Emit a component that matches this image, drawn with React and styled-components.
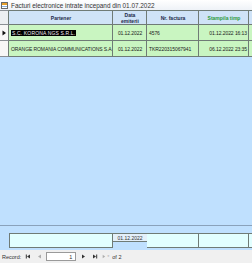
import React from 'react'
import styled, { createGlobalStyle } from 'styled-components'

const Global = createGlobalStyle`
  html, body { margin: 0; padding: 0; }
  body { font-family: "Liberation Sans", Arial, sans-serif; background: #bfe0fe; }
`

const Page = styled.div`
  width: 252px;
  height: 263px;
  display: flex;
  flex-direction: column;
  overflow: hidden;
  background: #bfe0fe;
`

const TitleBar = styled.div`
  height: 10px;
  display: flex;
  align-items: center;
  gap: 3px;
  padding-left: 1px;
  background: linear-gradient(#ffffff, #eef2f7);
  font-size: 6.4px;
  color: #333;
  white-space: nowrap;
`

const Grid = styled.div`
  display: grid;
  grid-template-columns: 9px 104px 34px 52px 50px 40px;
  grid-auto-rows: 16px;
  grid-template-rows: 15px;
`

const Cell = styled.div`
  box-sizing: border-box;
  border-right: 1px solid #6f7b76;
  border-bottom: 1px solid #6f7b76;
  background: ${p => (p.$head ? '#cfe3f7' : '#c9f5c1')};
  display: flex;
  align-items: center;
  justify-content: ${p => p.$align || 'flex-start'};
  padding: 0 1px 0 2px;
  font-size: 5px;
  letter-spacing: -0.08px;
  color: #1b1b1b;
  white-space: nowrap;
  overflow: hidden;
`

const HeadCell = styled(Cell)`
  font-weight: bold;
  letter-spacing: 0;
  color: ${p => (p.$green ? '#2b9a3c' : '#1d2a4a')};
  text-align: center;
  line-height: 6px;
  white-space: normal;
  border-top: 1px solid #6f7b76;
`

const Selector = styled.div`
  box-sizing: border-box;
  border-right: 1px solid #6f7b76;
  border-bottom: 1px solid #8a8f94;
  border-top: ${p => (p.$head ? '1px solid #8a8f94' : 'none')};
  background: ${p => (p.$head ? '#eceff2' : '#f7f7f7')};
  display: flex;
  align-items: center;
  justify-content: center;
`

const Selected = styled.span`
  background: #000;
  color: #f4eef4;
  padding: 0 1px;
  letter-spacing: 0.15px;
`

const Filler = styled.div`
  flex: 1;
  border-bottom: 1px solid #8aa2bb;
`

const FooterArea = styled.div`
  padding: 7px 0 2px 9px;
`

const FooterRow = styled.div`
  display: grid;
  grid-template-columns: 104px 34px 52px 50px 20px;
  height: 15px;
`

const FooterCell = styled.div`
  box-sizing: border-box;
  border: 1px solid #6f7b76;
  border-left: ${p => (p.$first ? '1px solid #6f7b76' : 'none')};
  background: #e2ffff;
`

const TotalCell = styled.div`
  box-sizing: border-box;
  height: 9px;
  border-top: 1px solid #6f7b76;
  border-bottom: 1px solid #6f7b76;
  background: #e4f0fa;
  font-size: 5px;
  color: #333;
  display: flex;
  align-items: center;
  justify-content: center;
`

const StatusBar = styled.div`
  flex: 0 0 13px;
  display: flex;
  align-items: center;
  gap: 3px;
  padding-left: 2px;
  background: #f0f0f0;
  font-size: 5.5px;
  color: #333;
`

const NavBtn = styled.div`
  width: 8px;
  height: 9px;
  display: flex;
  align-items: center;
  justify-content: center;
  opacity: ${p => (p.$off ? 0.35 : 1)};
`

const RecordBox = styled.div`
  box-sizing: border-box;
  width: 30px;
  height: 9px;
  border: 1px solid #9a9a9a;
  background: #fff;
  font-size: 5.5px;
  display: flex;
  align-items: center;
  justify-content: flex-end;
  padding-right: 3px;
`

const Tri = ({ dir = 'right', bar }) => (
  <svg width="7" height="7" viewBox="0 0 7 7">
    {dir === 'right' ? <path d="M2 1.5 L5 3.5 L2 5.5Z" fill="#333" /> : <path d="M5 1.5 L2 3.5 L5 5.5Z" fill="#333" />}
    {bar && (dir === 'right' ? <rect x="5.2" y="1.5" width="1" height="4" fill="#333" /> : <rect x="0.8" y="1.5" width="1" height="4" fill="#333" />)}
  </svg>
)

const rows = [
  { partner: 'S.C. KORONA NGS S.R.L.', date: '01.12.2022', nr: '4576', stamp: '01.12.2022 16:13', current: true },
  { partner: 'ORANGE ROMANIA COMMUNICATIONS S.A.', date: '01.12.2022', nr: 'TKR220315067941', stamp: '06.12.2022 23:35' },
]

const App = () => {
  return (
    <Page>
      <Global />
      <TitleBar>
        <svg width="7" height="7" viewBox="0 0 7 7">
          <rect x="0.5" y="0.5" width="6" height="6" fill="#fff" stroke="#6a6a6a" />
          <rect x="1" y="1" width="5" height="2" fill="#e8a02a" />
          <rect x="1" y="4" width="5" height="1" fill="#8ab0d8" />
        </svg>
        Facturi electronice intrate incepand din 01.07.2022
      </TitleBar>
      <Grid>
        <Selector $head />
        <HeadCell $head $align="center">Partener</HeadCell>
        <HeadCell $head $align="center">Data<br />emiterii</HeadCell>
        <HeadCell $head $align="center">Nr. factura</HeadCell>
        <HeadCell $head $align="center" $green>Stampila timp</HeadCell>
        <HeadCell $head />
        {rows.map(r => (
          <React.Fragment key={r.nr}>
            <Selector>
              {r.current && (
                <svg width="5" height="6" viewBox="0 0 5 6"><path d="M0.5 0.5 L4 3 L0.5 5.5Z" fill="#111" /></svg>
              )}
            </Selector>
            <Cell>{r.current ? <Selected>{r.partner}</Selected> : r.partner}</Cell>
            <Cell $align="center">{r.date}</Cell>
            <Cell>{r.nr}</Cell>
            <Cell $align="flex-end">{r.stamp}</Cell>
            <Cell />
          </React.Fragment>
        ))}
      </Grid>
      <Filler />
      <FooterArea>
        <FooterRow>
          <FooterCell $first />
          <TotalCell>01.12.2022</TotalCell>
          <FooterCell />
          <FooterCell />
          <FooterCell />
        </FooterRow>
      </FooterArea>
      <StatusBar>
        <span>Record:</span>
        <NavBtn><Tri dir="left" bar /></NavBtn>
        <NavBtn $off><Tri dir="left" /></NavBtn>
        <RecordBox>1</RecordBox>
        <NavBtn><Tri /></NavBtn>
        <NavBtn><Tri bar /></NavBtn>
        <NavBtn $off><Tri />*</NavBtn>
        <span>of 2</span>
      </StatusBar>
    </Page>
  )
}

export default App
